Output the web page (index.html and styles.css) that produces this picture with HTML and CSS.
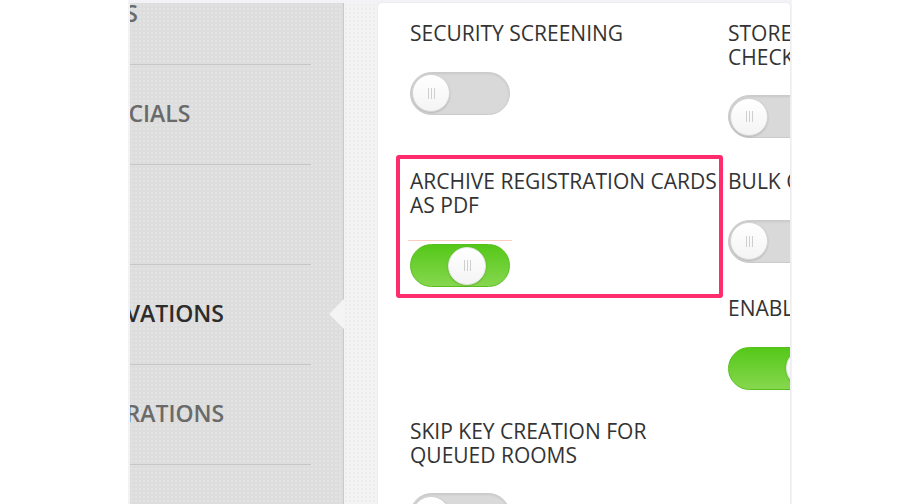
FILE: index.html
```html
<!DOCTYPE html>
<html lang="en">
<head>
<meta charset="utf-8">
<title>Settings</title>
<link rel="stylesheet" href="styles.css">
</head>
<body>
<div class="screen">
  <div class="gutter"></div>
  <div class="frame">
    <nav class="sidebar">
      <ul class="nav-list">
        <li class="nav-item">HOURS</li>
        <li class="nav-item">FINANCIALS</li>
        <li class="nav-item">KEYS</li>
        <li class="nav-item is-active">RESERVATIONS</li>
        <li class="nav-item">INTEGRATIONS</li>
        <li class="nav-item">DEVICES</li>
      </ul>
    </nav>
    <main class="content">
      <section class="card">
        <div class="settings-grid">
          <div class="setting s-security">
            <p class="setting-label">SECURITY SCREENING</p>
            <div class="toggle"><span class="knob"><span class="grip"></span></span></div>
          </div>
          <div class="setting s-store">
            <p class="setting-label">STORE PASSPORT SCANS AT<br>CHECK-IN</p>
            <div class="toggle"><span class="knob"><span class="grip"></span></span></div>
          </div>
          <div class="setting s-archive">
            <p class="setting-label">ARCHIVE REGISTRATION CARDS<br>AS PDF</p>
            <div class="focus-line"></div>
            <div class="toggle is-on is-sliding"><span class="knob"><span class="grip"></span></span></div>
          </div>
          <div class="setting s-bulk">
            <p class="setting-label">BULK CHECK-IN</p>
            <div class="toggle"><span class="knob"><span class="grip"></span></span></div>
          </div>
          <div class="setting s-enable">
            <p class="setting-label">ENABLE KEY ENCODING</p>
            <div class="toggle is-on"><span class="knob"><span class="grip"></span></span></div>
          </div>
          <div class="setting s-skip">
            <p class="setting-label">SKIP KEY CREATION FOR<br>QUEUED ROOMS</p>
            <div class="toggle"><span class="knob"><span class="grip"></span></span></div>
          </div>
        </div>
      </section>
    </main>
  </div>
</div>
</body>
</html>
```
FILE: styles.css
```css
html, body {
  margin: 0;
  padding: 0;
  background: #ffffff;
  font-family: "Open Sans", "Liberation Sans", sans-serif;
}

.screen {
  display: flex;
  height: 504px;
  overflow: hidden;
}

.gutter {
  width: 128px;
  flex: none;
  background: #ffffff;
}

.frame {
  width: 664px;
  flex: none;
  display: flex;
  box-sizing: border-box;
  padding: 3px 2px 0 2px;
  overflow: hidden;
  background: #f3f2f7;
}

/* Sidebar */
.sidebar {
  width: 214px;
  flex: none;
  overflow: hidden;
  background-color: #dddddd;
  background-image: radial-gradient(rgba(255, 255, 255, 0.18) 1px, transparent 1.3px);
  background-size: 4px 4px;
  box-shadow: inset -1px 0 0 #c9c9c9;
}

.nav-list {
  list-style: none;
  margin: -38px 33px 0 -72px;
  padding: 0;
}

.nav-item {
  position: relative;
  height: 100px;
  box-sizing: border-box;
  padding-bottom: 3px;
  border-bottom: 1px solid #c6c6c6;
  display: flex;
  align-items: center;
  white-space: nowrap;
  font-size: 23px;
  font-weight: 600;
  color: #6a6a6a;
}

.nav-item.is-active {
  color: #2c2c2c;
}

.nav-item.is-active::after {
  content: "";
  position: absolute;
  right: -33px;
  top: 50%;
  margin-top: -16px;
  border-style: solid;
  border-width: 15px 15px 15px 0;
  border-color: transparent #f4f4f4 transparent transparent;
}

/* Content */
.content {
  flex: 1;
  min-width: 0;
  display: flex;
  padding-left: 34px;
  background-color: #f3f3f3;
  background-image: radial-gradient(rgba(0, 0, 0, 0.025) 1px, transparent 1.3px);
  background-size: 4px 4px;
}

.card {
  flex: 1;
  min-width: 0;
  overflow: hidden;
  box-sizing: border-box;
  padding: 19px 0 0 32px;
  background: #ffffff;
  border-radius: 4px 4px 0 0;
  box-shadow: 0 0 0 1px #ececf1;
}

.settings-grid {
  display: grid;
  grid-template-columns: 318px 300px;
  grid-template-rows: 148px 127px 123px auto;
}

.s-security { grid-column: 1; grid-row: 1; }
.s-store { grid-column: 2; grid-row: 1; }
.s-archive { grid-column: 1; grid-row: 2 / span 2; position: relative; }
.s-bulk { grid-column: 2; grid-row: 2; }
.s-enable { grid-column: 2; grid-row: 3; }
.s-skip { grid-column: 1; grid-row: 4; }

.setting-label {
  margin: 0;
  font-size: 21px;
  line-height: 23.5px;
  font-weight: 400;
  color: #333333;
  white-space: nowrap;
}

.s-archive::after {
  content: "";
  position: absolute;
  left: -14px;
  top: -15px;
  width: 327px;
  height: 143px;
  box-sizing: border-box;
  border: 4px solid #fe2c6d;
  border-radius: 3px;
  pointer-events: none;
}

.focus-line {
  width: 104px;
  height: 1px;
  margin: 23px 0 0 -2px;
  background: #fbcfc0;
}

/* Toggles */
.toggle {
  margin-top: 26px;
  width: 100px;
  height: 43px;
  box-sizing: border-box;
  padding: 0 1px;
  display: flex;
  align-items: center;
  border-radius: 22px;
  border: 1px solid #cbcbcb;
  background: #d9d9d9;
  box-shadow: inset 0 1px 2px rgba(0, 0, 0, 0.08);
}

.focus-line + .toggle {
  margin-top: 3px;
}

.toggle.is-on {
  border-color: #56bf1c;
  background: linear-gradient(#55c819, #86d74e);
  box-shadow: none;
}

.knob {
  width: 38px;
  height: 38px;
  box-sizing: border-box;
  border-radius: 50%;
  border: 1px solid #d4d4d4;
  background: linear-gradient(#ffffff, #f4f4f4);
  box-shadow: 0 1px 2px rgba(0, 0, 0, 0.18);
  display: flex;
  align-items: center;
  justify-content: center;
}

.toggle.is-on .knob {
  margin-left: 56px;
  border-color: #e6e6e6;
}

.toggle.is-sliding .knob {
  margin-left: 36px;
}

.grip {
  width: 7px;
  height: 11px;
  background: linear-gradient(to right, #cfcfcf 0 1px, transparent 1px 3px, #cfcfcf 3px 4px, transparent 4px 6px, #cfcfcf 6px 7px);
}
```
